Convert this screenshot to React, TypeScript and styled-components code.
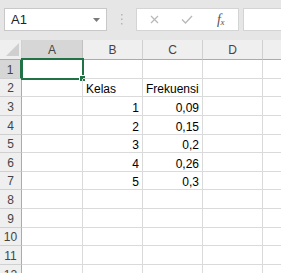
import styled, { createGlobalStyle } from "styled-components";

const GlobalStyle = createGlobalStyle`
  html, body {
    margin: 0;
    padding: 0;
    background: #ffffff;
  }
  body {
    font-family: "Liberation Sans", Arial, sans-serif;
  }
`;

const Page = styled.div`
  width: 281px;
  height: 273px;
  overflow: hidden;
  background: #ffffff;
`;

const FormulaBar = styled.div`
  height: 40px;
  box-sizing: border-box;
  background: #e6e6e6;
  display: flex;
  align-items: flex-start;
  padding: 8px 0 0 4px;
`;

const NameBox = styled.div`
  width: 103px;
  height: 23px;
  box-sizing: border-box;
  background: #ffffff;
  border: 1px solid #c8c8c8;
  display: flex;
  align-items: center;
  justify-content: space-between;
  padding: 0 6px 0 6px;
  font-size: 13px;
  color: #222;
`;

const Grip = styled.div`
  width: 29px;
  height: 23px;
  display: flex;
  align-items: center;
  justify-content: center;
`;

const ButtonBox = styled.div`
  width: 103px;
  height: 23px;
  box-sizing: border-box;
  background: #ffffff;
  border: 1px solid #d4d4d4;
  display: flex;
  align-items: center;
  padding-left: 13px;
  gap: 22px;
`;

const FxLabel = styled.span`
  margin-left: 2px;
  font-family: "Liberation Serif", "Times New Roman", serif;
  font-style: italic;
  font-size: 14px;
  color: #555;
  letter-spacing: -0.5px;
  sub {
    font-size: 9px;
    vertical-align: -1px;
  }
`;

const FormulaInput = styled.div`
  flex: 1;
  height: 23px;
  margin-left: 4px;
  box-sizing: border-box;
  background: #ffffff;
  border: 1px solid #d4d4d4;
  border-right: none;
`;

const Sheet = styled.div`
  display: grid;
  grid-template-columns: 22px 61px 60px 60px 60px 60px;
  grid-template-rows: 20px;
  grid-auto-rows: 18.63px;
  font-size: 12px;
  color: #000;
`;

const Corner = styled.div`
  box-sizing: border-box;
  background: #efefef;
  border-right: 1px solid #d0d0d0;
  border-bottom: 1px solid #ababab;
  display: flex;
  align-items: flex-end;
  justify-content: flex-end;
  padding: 0 2px 3px 0;
`;

const ColHeader = styled.div<{ $active?: boolean }>`
  box-sizing: border-box;
  background: ${(p) => (p.$active ? "#d6d6d6" : "#efefef")};
  border-right: 1px solid ${(p) => (p.$active ? "#c0c0c0" : "#d0d0d0")};
  border-bottom: ${(p) => (p.$active ? "2px solid #217346" : "1px solid #ababab")};
  display: flex;
  align-items: center;
  justify-content: center;
  color: #444;
  font-size: 12px;
  padding-top: ${(p) => (p.$active ? "1px" : "0")};
`;

const RowHeader = styled.div<{ $active?: boolean }>`
  box-sizing: border-box;
  background: ${(p) => (p.$active ? "#d6d6d6" : "#efefef")};
  border-right: ${(p) => (p.$active ? "2px solid #217346" : "1px solid #ababab")};
  border-bottom: 1px solid #d0d0d0;
  display: flex;
  align-items: flex-end;
  justify-content: center;
  color: #444;
  line-height: 14px;
  padding-bottom: 1px;
`;

const Cell = styled.div<{ $align?: "left" | "right" }>`
  position: relative;
  box-sizing: border-box;
  border-right: 1px solid #dadada;
  border-bottom: 1px solid #dadada;
  display: flex;
  align-items: flex-end;
  justify-content: ${(p) => (p.$align === "right" ? "flex-end" : "flex-start")};
  padding: 0 3px 0 3px;
  line-height: 14px;
  white-space: nowrap;
`;

const Selection = styled.div`
  position: absolute;
  left: -1px;
  top: -2px;
  right: -2px;
  bottom: -2px;
  border: 2px solid #217346;
  pointer-events: none;
`;

const FillHandle = styled.div`
  position: absolute;
  right: -4px;
  bottom: -4px;
  width: 5px;
  height: 5px;
  background: #217346;
  border: 1px solid #ffffff;
`;

const columns = ["A", "B", "C", "D", ""];

const data: Record<number, [string, string, string]> = {
  2: ["", "Kelas", "Frekuensi"],
  3: ["", "1", "0,09"],
  4: ["", "2", "0,15"],
  5: ["", "3", "0,2"],
  6: ["", "4", "0,26"],
  7: ["", "5", "0,3"],
};

const isNumber = (v: string) => /^[0-9,]+$/.test(v);

export default function App() {
  const rows = Array.from({ length: 12 }, (_, i) => i + 1);
  return (
    <Page>
      <GlobalStyle />
      <FormulaBar>
        <NameBox>
          A1
          <svg width="7" height="4" viewBox="0 0 7 4">
            <path d="M0 0 L7 0 L3.5 4 Z" fill="#7a7a7a" />
          </svg>
        </NameBox>
        <Grip>
          <svg width="3" height="11" viewBox="0 0 3 11">
            <rect x="1" y="0" width="1.5" height="1.5" fill="#b5b5b5" />
            <rect x="1" y="4.5" width="1.5" height="1.5" fill="#b5b5b5" />
            <rect x="1" y="9" width="1.5" height="1.5" fill="#b5b5b5" />
          </svg>
        </Grip>
        <ButtonBox>
          <svg width="9" height="9" viewBox="0 0 9 9">
            <path d="M1 1 L8 8 M8 1 L1 8" stroke="#b8b8b8" strokeWidth="1.2" />
          </svg>
          <svg width="12" height="9" viewBox="0 0 12 9">
            <path d="M1 4.5 L4.5 8 L11 1" stroke="#b8b8b8" strokeWidth="1.3" fill="none" />
          </svg>
          <FxLabel>
            f<sub>x</sub>
          </FxLabel>
        </ButtonBox>
        <FormulaInput />
      </FormulaBar>
      <Sheet>
        <Corner>
          <svg width="13" height="13" viewBox="0 0 13 13">
            <path d="M13 0 L13 13 L0 13 Z" fill="#cfcfcf" />
          </svg>
        </Corner>
        {columns.map((c, i) => (
          <ColHeader key={c + i} $active={c === "A"}>
            {c}
          </ColHeader>
        ))}
        {rows.map((r) => {
          const values = data[r] ?? ["", "", ""];
          return [
            <RowHeader key={`h${r}`} $active={r === 1}>
              {r}
            </RowHeader>,
            ...values.map((v, ci) => (
              <Cell key={`${r}-${ci}`} $align={isNumber(v) ? "right" : "left"}>
                {v}
                {r === 1 && ci === 0 && (
                  <Selection>
                    <FillHandle />
                  </Selection>
                )}
              </Cell>
            )),
            <Cell key={`${r}-d`} />,
            <Cell key={`${r}-e`} />,
          ];
        })}
      </Sheet>
    </Page>
  );
}
